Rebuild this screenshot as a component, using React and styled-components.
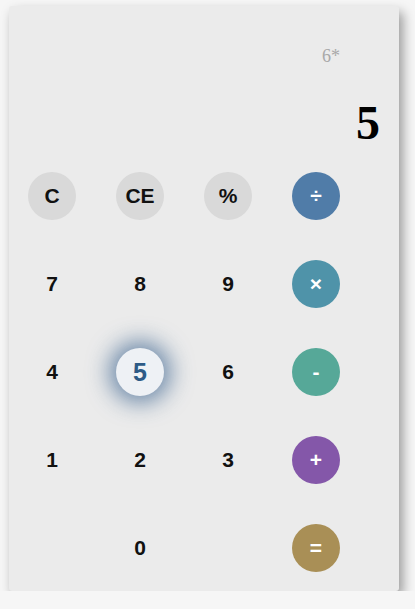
import styled, { createGlobalStyle } from "styled-components";

const GlobalStyle = createGlobalStyle`
  html, body {
    margin: 0;
    background: #f6f6f6;
  }
  body {
    padding: 6px 0 0 9px;
    font-family: "Liberation Sans", Arial, sans-serif;
  }
`;

const Card = styled.div`
  width: 390px;
  height: 585px;
  box-sizing: border-box;
  background: #ebebeb;
  border-radius: 3px;
  box-shadow: 4px 6px 12px rgba(0, 0, 0, 0.38);
  padding-left: 19px;
  display: flex;
  flex-direction: column;
`;

const Display = styled.div`
  height: 166px;
  display: flex;
  flex-direction: column;
  align-items: flex-end;
  font-family: "Liberation Serif", "Times New Roman", serif;
`;

const History = styled.div`
  margin-top: 40px;
  padding-right: 59px;
  font-size: 18px;
  color: #a8a8a8;
  line-height: 20px;
`;

const Result = styled.div`
  margin-top: 30px;
  padding-right: 19px;
  font-size: 48px;
  font-weight: bold;
  color: #000;
  line-height: 54px;
`;

const Keys = styled.div`
  display: grid;
  grid-template-columns: repeat(4, 48px);
  grid-auto-rows: 48px;
  gap: 40px;
`;

const Key = styled.button`
  width: 48px;
  height: 48px;
  border: 0;
  outline: 0;
  padding: 0;
  border-radius: 50%;
  font-family: "Liberation Sans", Arial, sans-serif;
  font-weight: 700;
  font-size: 21px;
  color: ${({ $op }) => ($op ? "#fff" : "#111")};
  background: ${({ $bg }) => $bg || "transparent"};
  display: flex;
  align-items: center;
  justify-content: center;
  grid-column: ${({ $col }) => $col || "auto"};

  ${({ $active }) =>
    $active &&
    `
    background: #eef1f5;
    color: #2d5a86;
    font-size: 25px;
    box-shadow: 0 0 22px 7px rgba(45, 88, 135, 0.65);
  `}
`;

const keys = [
  { label: "C", bg: "#d9d9d9" },
  { label: "CE", bg: "#d9d9d9" },
  { label: "%", bg: "#d9d9d9" },
  { label: "÷", bg: "#507ca8", op: true },
  { label: "7" },
  { label: "8" },
  { label: "9" },
  { label: "×", bg: "#4f93a9", op: true },
  { label: "4" },
  { label: "5", active: true },
  { label: "6" },
  { label: "-", bg: "#56a898", op: true },
  { label: "1" },
  { label: "2" },
  { label: "3" },
  { label: "+", bg: "#8457a9", op: true },
  { label: "0", col: "2" },
  { label: "=", bg: "#a98f56", op: true, col: "4" },
];

export default function App() {
  return (
    <>
      <GlobalStyle />
      <Card>
        <Display>
          <History>6*</History>
          <Result>5</Result>
        </Display>
        <Keys>
          {keys.map((k) => (
            <Key
              key={k.label}
              $bg={k.bg}
              $op={k.op}
              $active={k.active}
              $col={k.col}
            >
              {k.label}
            </Key>
          ))}
        </Keys>
      </Card>
    </>
  );
}
